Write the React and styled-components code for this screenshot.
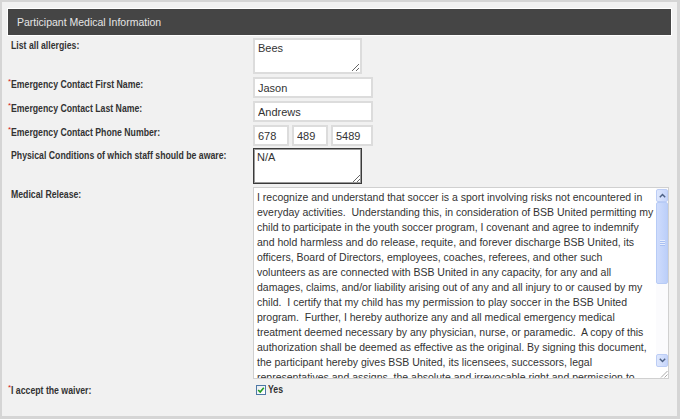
import React from 'react';
import styled, { createGlobalStyle } from 'styled-components';

const GlobalStyle = createGlobalStyle`
    html, body {
        margin: 0;
        padding: 0;
        background: #d5d5d5;
    }
`;

const Frame = styled.div`
    width: 680px;
    height: 419px;
    box-sizing: border-box;
    padding: 2px 3px 3px 2px;
`;

const Panel = styled.div`
    height: 100%;
    box-sizing: border-box;
    background: #f1f1f1;
    padding: 6px 5px 0 5px;
    font-family: "Liberation Sans", Arial, sans-serif;
    font-size: 10.5px;
`;

const Header = styled.div`
    height: 28px;
    box-sizing: border-box;
    border: 1px solid #ffffff;
    background: #454545;
    color: #e6e6e6;
    font-size: 10.5px;
    line-height: 26px;
    padding-left: 9px;
`;

const Row = styled.div`
    display: flex;
    align-items: flex-start;
    margin-top: ${(p) => p.$top}px;
`;

const Label = styled.div`
    width: 246px;
    flex: none;
    box-sizing: border-box;
    padding: 1px 0 0 4px;
    font-size: 10.5px;
    line-height: 13px;
`;

// the bold labels are set in a narrow face; Arial squeezed to match
const Narrow = styled.span`
    display: inline-block;
    vertical-align: top;
    white-space: nowrap;
    font-weight: bold;
    font-size: 10.5px;
    line-height: 13px;
    color: #333333;
    transform: scaleX(0.83);
    transform-origin: left center;
`;

const Req = styled.span`
    display: inline-block;
    width: 3px;
    margin-left: -3px;
    color: #d21a1a;
    font-size: 8px;
    vertical-align: top;
    line-height: 8px;
`;

const TextBox = styled.textarea`
    width: 109px;
    height: 36px;
    box-sizing: border-box;
    margin: 0;
    padding: 2px 3px;
    border: ${(p) => (p.$dark ? '1px solid #3a3a3a' : '2px solid #dcdcdc')};
    box-shadow: ${(p) => (p.$dark ? 'inset 0 0 0 1px #9a9a9a' : 'none')};
    background: #ffffff;
    font-family: "Liberation Sans", Arial, sans-serif;
    font-size: 11px;
    color: #333333;
    outline: none;
`;

const Input = styled.input`
    width: ${(p) => p.$w}px;
    height: 21px;
    box-sizing: border-box;
    margin: 0;
    padding: 0 3px;
    border: 2px solid #dcdcdc;
    background: #ffffff;
    font-family: "Liberation Sans", Arial, sans-serif;
    font-size: 11px;
    color: #333333;
    outline: none;
`;

const Phone = styled.div`
    display: flex;
    gap: 3px;
`;

const Release = styled.div`
    width: 416px;
    height: 192px;
    box-sizing: border-box;
    border: 1px solid #d0d0d0;
    background: #ffffff;
    display: flex;
`;

const ReleaseText = styled.div`
    flex: 1;
    overflow: hidden;
    padding: 2px 3px;
    font-size: 10.5px;
    line-height: 15px;
    color: #333333;
`;

const Line = styled.div`
    white-space: pre;
`;

const ScrollBar = styled.div`
    width: 12px;
    flex: none;
    display: flex;
    flex-direction: column;
    padding-top: 1px;
    background: #fbfbfd;
`;

const ScrollButton = styled.div`
    height: 13px;
    box-sizing: border-box;
    border: 1px solid #bccdf5;
    border-radius: 2px;
    background: linear-gradient(to right, #dfe8fd, #c6d5fb);
    display: flex;
    align-items: center;
    justify-content: center;
`;

const Thumb = styled.div`
    height: 82px;
    box-sizing: border-box;
    border: 1px solid #b7cbf6;
    border-radius: 2px;
    background: linear-gradient(to right, #cfdcfc, #bccff9);
    display: flex;
    align-items: center;
    justify-content: center;
`;

const Grip = styled.div`
    width: 5px;
    height: 6px;
    background: repeating-linear-gradient(to bottom, #e6edfd 0 1px, #a9c0f2 1px 2px);
`;

const Track = styled.div`
    flex: 1;
`;

const Corner = styled.div`
    height: 11px;
    display: flex;
    align-items: flex-end;
    justify-content: flex-end;
    background: #ffffff;
`;

const Check = styled.div`
    display: flex;
    align-items: center;
    gap: 2px;
    margin: 0 0 0 3px;
    line-height: 13px;
`;

const Box = styled.div`
    width: 10px;
    height: 10px;
    box-sizing: border-box;
    border: 1px solid #4d78a6;
    background: linear-gradient(135deg, #e9ecef, #ffffff);
    display: flex;
    align-items: center;
    justify-content: center;
`;

const releaseLines = [
    'I recognize and understand that soccer is a sport involving risks not encountered in',
    'everyday activities.  Understanding this, in consideration of BSB United permitting my',
    'child to participate in the youth soccer program, I covenant and agree to indemnify',
    'and hold harmless and do release, requite, and forever discharge BSB United, its',
    'officers, Board of Directors, employees, coaches, referees, and other such',
    'volunteers as are connected with BSB United in any capacity, for any and all',
    'damages, claims, and/or liability arising out of any and all injury to or caused by my',
    'child.  I certify that my child has my permission to play soccer in the BSB United',
    'program.  Further, I hereby authorize any and all medical emergency medical',
    'treatment deemed necessary by any physician, nurse, or paramedic.  A copy of this',
    'authorization shall be deemed as effective as the original. By signing this document,',
    'the participant hereby gives BSB United, its licensees, successors, legal',
    'representatives and assigns, the absolute and irrevocable right and permission to',
    'use the name and likeness of the participant in any publication or promotion.',
];

const Arrow = ({ up }) => (
    <svg width="7" height="5" viewBox="0 0 7 5">
        <path
            d={up ? 'M0.8 4.2 L3.5 1.4 L6.2 4.2' : 'M0.8 0.8 L3.5 3.6 L6.2 0.8'}
            fill="none"
            stroke="#4d6185"
            strokeWidth="1.4"
        />
    </svg>
);

const Resizer = () => (
    <svg width="9" height="9" viewBox="0 0 9 9">
        <path d="M8.5 2 L2 8.5 M8.5 5.5 L5.5 8.5" stroke="#a8a8a8" strokeWidth="1" />
    </svg>
);

const App = () => {
    return (
        <>
            <GlobalStyle />
            <Frame>
                <Panel>
                    <Header>Participant Medical Information</Header>
                    <Row $top={2}>
                        <Label><Narrow>List all allergies:</Narrow></Label>
                        <TextBox defaultValue="Bees" />
                    </Row>
                    <Row $top={3}>
                        <Label><Req>*</Req><Narrow>Emergency Contact First Name:</Narrow></Label>
                        <Input $w={120} defaultValue="Jason" />
                    </Row>
                    <Row $top={3}>
                        <Label><Req>*</Req><Narrow>Emergency Contact Last Name:</Narrow></Label>
                        <Input $w={120} defaultValue="Andrews" />
                    </Row>
                    <Row $top={3}>
                        <Label><Req>*</Req><Narrow>Emergency Contact Phone Number:</Narrow></Label>
                        <Phone>
                            <Input $w={36} defaultValue="678" />
                            <Input $w={36} defaultValue="489" />
                            <Input $w={42} defaultValue="5489" />
                        </Phone>
                    </Row>
                    <Row $top={2}>
                        <Label><Narrow>Physical Conditions of which staff should be aware:</Narrow></Label>
                        <TextBox $dark defaultValue="N/A" />
                    </Row>
                    <Row $top={3}>
                        <Label><Narrow>Medical Release:</Narrow></Label>
                        <Release>
                            <ReleaseText>
                                {releaseLines.map((line, i) => (
                                    <Line key={i}>{line}</Line>
                                ))}
                            </ReleaseText>
                            <ScrollBar>
                                <ScrollButton><Arrow up /></ScrollButton>
                                <Thumb><Grip /></Thumb>
                                <Track />
                                <ScrollButton><Arrow /></ScrollButton>
                                <Corner><Resizer /></Corner>
                            </ScrollBar>
                        </Release>
                    </Row>
                    <Row $top={4}>
                        <Label><Req>*</Req><Narrow>I accept the waiver:</Narrow></Label>
                        <Check>
                            <Box>
                                <svg width="8" height="8" viewBox="0 0 8 8">
                                    <path d="M1.2 4 L3.2 6 L6.8 1.8" fill="none" stroke="#1f9a1f" strokeWidth="1.6" />
                                </svg>
                            </Box>
                            <Narrow>Yes</Narrow>
                        </Check>
                    </Row>
                </Panel>
            </Frame>
        </>
    );
};

export default App;
